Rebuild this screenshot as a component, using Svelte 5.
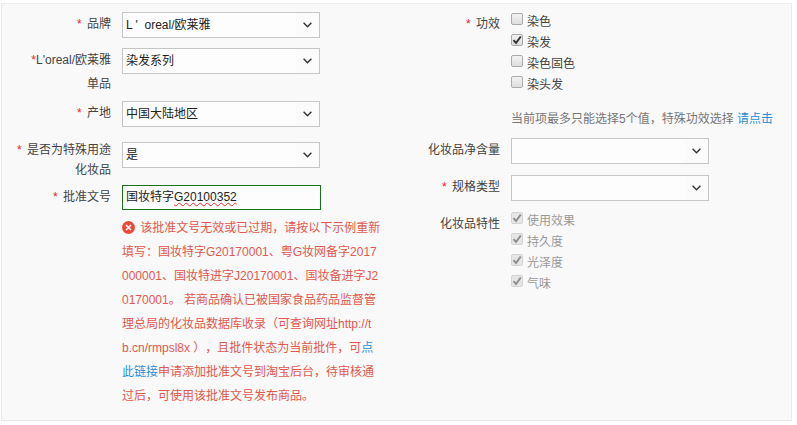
<script lang="ts">
  const effects = [
    { name: "染色", checked: false },
    { name: "染发", checked: true },
    { name: "染色固色", checked: false },
    { name: "染头发", checked: false }
  ];
  const traits = ["使用效果", "持久度", "光泽度", "气味"];
</script>

{#snippet chevron()}
  <span class="arrow">
    <svg width="9" height="6" viewBox="0 0 9 6">
      <path d="M0.6 0.8 L4.5 4.8 L8.4 0.8" fill="none" stroke="#333" stroke-width="1.4" />
    </svg>
  </span>
{/snippet}

{#snippet tick()}
  <svg width="10" height="10" viewBox="0 0 10 10">
    <path d="M1.5 5.2 L4 8 L8.8 1.5" fill="none" stroke="currentColor" stroke-width="2" />
  </svg>
{/snippet}

<div class="panel">
  <div class="col">
    <div class="row r1">
      <div class="label"><i>*</i> 品牌</div>
      <div class="select"><span class="val">L '&nbsp; oreal/欧莱雅</span>{@render chevron()}</div>
    </div>
    <div class="row r2">
      <div class="label"><i class="tight">*</i>L'oreal/欧莱雅<br />单品</div>
      <div class="select"><span class="val">染发系列</span>{@render chevron()}</div>
    </div>
    <div class="row r3">
      <div class="label"><i>*</i> 产地</div>
      <div class="select"><span class="val">中国大陆地区</span>{@render chevron()}</div>
    </div>
    <div class="row r4">
      <div class="label two"><i>*</i> 是否为特殊用途<br />化妆品</div>
      <div class="select"><span class="val">是</span>{@render chevron()}</div>
    </div>
    <div class="row r5">
      <div class="label"><i>*</i> 批准文号</div>
      <div>
        <div class="input">国妆特字<span class="wavy">G20100352</span></div>
        <p class="error">
          <svg class="err-icon" width="13" height="13" viewBox="0 0 13 13">
            <circle cx="6.5" cy="6.5" r="6.5" fill="#ea4a3c" />
            <path d="M4 4 L9 9 M9 4 L4 9" stroke="#fff" stroke-width="1.5" />
          </svg>
          该批准文号无效或已过期，请按以下示例重新填写：国妆特字G20170001、粤G妆网备字2017000001、国妆特进字J20170001、国妆备进字J20170001。 若商品确认已被国家食品药品监督管理总局的化妆品数据库收录（可查询网址http://tb.cn/rmpsl8x ），且批件状态为当前批件，可<span class="link">点此链接</span>申请添加批准文号到淘宝后台，待审核通过后，可使用该批准文号发布商品。
        </p>
      </div>
    </div>
  </div>

  <div class="col">
    <div class="row effects">
      <div class="label"><i>*</i> 功效</div>
      <div>
        {#each effects as item}
          <div class="option">
            <span class="box" class:on={item.checked}>{#if item.checked}{@render tick()}{/if}</span>{item.name}
          </div>
        {/each}
        <p class="hint">当前项最多只能选择5个值，特殊功效选择 <span class="link">请点击</span></p>
      </div>
    </div>
    <div class="row volume">
      <div class="label">化妆品净含量</div>
      <div class="select">{@render chevron()}</div>
    </div>
    <div class="row spec">
      <div class="label"><i>*</i> 规格类型</div>
      <div class="select">{@render chevron()}</div>
    </div>
    <div class="row traits">
      <div class="label">化妆品特性</div>
      <div>
        {#each traits as name}
          <div class="option off">
            <span class="box on">{@render tick()}</span>{name}
          </div>
        {/each}
      </div>
    </div>
  </div>
</div>

<style>
  :global(body) {
    background: #fff;
    font-family: "Liberation Sans", "Noto Sans CJK SC", sans-serif;
    font-size: 12px;
    color: #333;
    text-spacing-trim: space-all;
  }

  .panel {
    display: grid;
    grid-template-columns: 389px 1fr;
    box-sizing: border-box;
    width: 791px;
    height: 418px;
    margin: 3px 0 0 1px;
    padding-top: 8px;
    background: #f9f9f9;
    border: 1px solid #eaeaea;
    border-top-color: #eee;
  }

  .row {
    display: grid;
    grid-template-columns: 109px 1fr;
    column-gap: 11px;
    align-items: start;
  }

  .r2 { margin-top: 10px; }
  .r3 { margin-top: 5px; }
  .r4 { margin-top: 15px; }
  .r5 { margin-top: 5px; }

  .label {
    line-height: 24px;
    text-align: right;
    color: #444;
  }

  .label.two {
    margin-top: -2px;
    line-height: 20px;
  }

  .label i {
    margin-right: 2px;
    font-style: normal;
    color: #f02020;
  }

  .label i.tight { margin-right: 0; }

  .select {
    display: flex;
    justify-content: space-between;
    box-sizing: border-box;
    width: 198px;
    height: 26px;
    background: #fdfdfd;
    border: 1px solid #c6c6c6;
    line-height: 24px;
    color: #222;
  }

  .val { padding-left: 3px; }

  .arrow {
    display: flex;
    align-items: center;
    justify-content: center;
    width: 23px;
    margin-left: auto;
    background: #fbfbfb;
  }

  .input {
    box-sizing: border-box;
    width: 199px;
    height: 25px;
    padding-left: 3px;
    background: #fdfdfd;
    border: 1px solid #16751a;
    line-height: 23px;
    color: #222;
  }

  .wavy { text-decoration: underline wavy #e03030 1px; }

  .error {
    width: 259px;
    margin: 6px 0 0;
    line-height: 24px;
    color: #e2584e;
    word-break: break-all;
  }

  .err-icon {
    margin-right: 2px;
    vertical-align: -2px;
  }

  .link { color: #2a8fdc; }

  .effects { margin-top: -2px; }
  .effects .label { margin-top: 2px; }

  .option {
    display: flex;
    align-items: center;
    height: 21px;
    color: #444;
  }

  .option.off { color: #999; }

  .box {
    display: flex;
    align-items: center;
    justify-content: center;
    box-sizing: border-box;
    width: 12px;
    height: 12px;
    margin: -3px 4px 0 0;
    background: linear-gradient(#f2f2f2, #dedede);
    border: 1px solid #aaa;
    border-radius: 2px;
    color: #333;
  }

  .off .box {
    background: #e6e6e6;
    border-color: #d4d4d4;
    color: #8e8e8e;
  }

  .hint {
    margin: 13px 0 0;
    line-height: 24px;
    color: #777;
  }

  .volume { margin-top: 7px; }
  .spec { margin-top: 11px; }
  .traits { margin-top: 8px; }

  .traits .label { margin-top: 3px; }
</style>
